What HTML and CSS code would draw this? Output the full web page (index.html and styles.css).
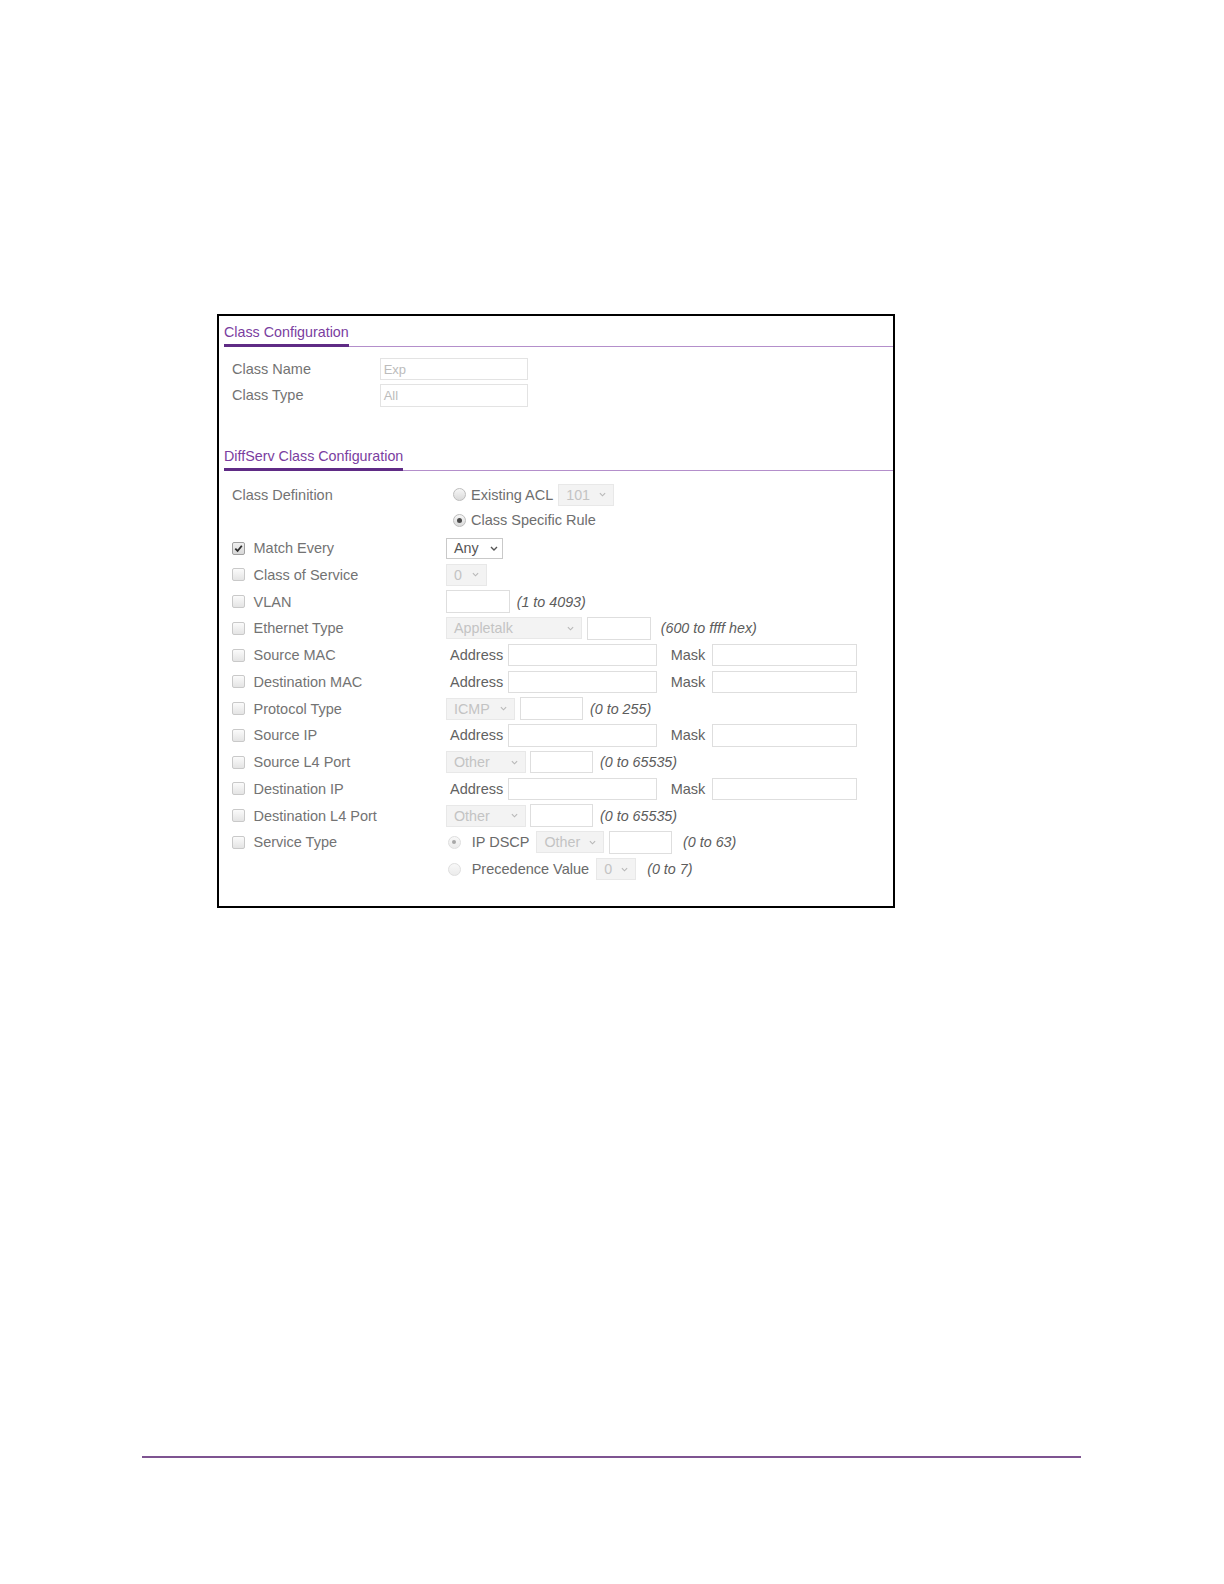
FILE: index.html
```html
<!DOCTYPE html>
<html>
<head>
<meta charset="utf-8">
<link rel="stylesheet" href="styles.css">
</head>
<body>
<div class="page">
  <div class="frame">
    <div class="sec-head"><span>Class Configuration</span></div>
    <div class="cc-rows">
      <div class="cc-row"><div class="cc-label">Class Name</div><div class="txt-dis">Exp</div></div>
      <div class="cc-row"><div class="cc-label">Class Type</div><div class="txt-dis">All</div></div>
    </div>

    <div class="sec-head sec2"><span>DiffServ Class Configuration</span></div>
    <div class="ds">
      <div class="ds-row def">
        <div class="ds-label sub">Class Definition</div>
        <div class="def-opts">
          <div class="sub ctrl"><span class="rb r-def"></span><span class="opt">Existing ACL</span><div class="sel dis w-acl"><span>101</span><svg class="chev" viewBox="0 0 8 5"><path d="M1 1 L4 4 L7 1"/></svg></div></div>
          <div class="sub ctrl"><span class="rb r-def on"></span><span class="opt">Class Specific Rule</span></div>
        </div>
      </div>

      <div class="ds-row">
        <div class="ds-label"><span class="cb on"><svg viewBox="0 0 12 12"><path d="M2.5 6.2 L5 8.7 L9.6 3"/></svg></span>Match Every</div>
        <div class="ctrl"><div class="sel en w-any"><span>Any</span><svg class="chev" viewBox="0 0 8 5"><path d="M1 1 L4 4 L7 1"/></svg></div></div>
      </div>
      <div class="ds-row">
        <div class="ds-label"><span class="cb"></span>Class of Service</div>
        <div class="ctrl"><div class="sel dis w-cos"><span>0</span><svg class="chev" viewBox="0 0 8 5"><path d="M1 1 L4 4 L7 1"/></svg></div></div>
      </div>
      <div class="ds-row">
        <div class="ds-label"><span class="cb"></span>VLAN</div>
        <div class="ctrl"><div class="inp w-sm"></div><span class="hint h-vlan">(1 to 4093)</span></div>
      </div>
      <div class="ds-row">
        <div class="ds-label"><span class="cb"></span>Ethernet Type</div>
        <div class="ctrl"><div class="sel dis w-eth"><span>Appletalk</span><svg class="chev" viewBox="0 0 8 5"><path d="M1 1 L4 4 L7 1"/></svg></div><div class="inp w-sm ml-eth"></div><span class="hint h-eth">(600 to ffff hex)</span></div>
      </div>
      <div class="ds-row">
        <div class="ds-label"><span class="cb"></span>Source MAC</div>
        <div class="ctrl"><span class="addr">Address</span><div class="inp w-addr"></div><span class="mask">Mask</span><div class="inp w-mask"></div></div>
      </div>
      <div class="ds-row">
        <div class="ds-label"><span class="cb"></span>Destination MAC</div>
        <div class="ctrl"><span class="addr">Address</span><div class="inp w-addr"></div><span class="mask">Mask</span><div class="inp w-mask"></div></div>
      </div>
      <div class="ds-row">
        <div class="ds-label"><span class="cb"></span>Protocol Type</div>
        <div class="ctrl"><div class="sel dis w-icmp"><span>ICMP</span><svg class="chev" viewBox="0 0 8 5"><path d="M1 1 L4 4 L7 1"/></svg></div><div class="inp w-sm ml-icmp"></div><span class="hint h-std">(0 to 255)</span></div>
      </div>
      <div class="ds-row">
        <div class="ds-label"><span class="cb"></span>Source IP</div>
        <div class="ctrl"><span class="addr">Address</span><div class="inp w-addr"></div><span class="mask">Mask</span><div class="inp w-mask"></div></div>
      </div>
      <div class="ds-row">
        <div class="ds-label"><span class="cb"></span>Source L4 Port</div>
        <div class="ctrl"><div class="sel dis w-other"><span>Other</span><svg class="chev" viewBox="0 0 8 5"><path d="M1 1 L4 4 L7 1"/></svg></div><div class="inp w-sm ml-other"></div><span class="hint h-std">(0 to 65535)</span></div>
      </div>
      <div class="ds-row">
        <div class="ds-label"><span class="cb"></span>Destination IP</div>
        <div class="ctrl"><span class="addr">Address</span><div class="inp w-addr"></div><span class="mask">Mask</span><div class="inp w-mask"></div></div>
      </div>
      <div class="ds-row">
        <div class="ds-label"><span class="cb"></span>Destination L4 Port</div>
        <div class="ctrl"><div class="sel dis w-other"><span>Other</span><svg class="chev" viewBox="0 0 8 5"><path d="M1 1 L4 4 L7 1"/></svg></div><div class="inp w-sm ml-other"></div><span class="hint h-std">(0 to 65535)</span></div>
      </div>
      <div class="ds-row">
        <div class="ds-label"><span class="cb"></span>Service Type</div>
        <div class="ctrl"><span class="rb r-svc on"></span><span class="opt2">IP DSCP</span><div class="sel dis w-dscp"><span>Other</span><svg class="chev" viewBox="0 0 8 5"><path d="M1 1 L4 4 L7 1"/></svg></div><div class="inp w-sm ml-icmp"></div><span class="hint h-svc">(0 to 63)</span></div>
      </div>
      <div class="ds-row">
        <div class="ds-label"></div>
        <div class="ctrl"><span class="rb r-svc"></span><span class="opt2">Precedence Value</span><div class="sel dis w-prec"><span>0</span><svg class="chev" viewBox="0 0 8 5"><path d="M1 1 L4 4 L7 1"/></svg></div><span class="hint h-svc">(0 to 7)</span></div>
      </div>
    </div>
  </div>
  <div class="rule"></div>
</div>
</body>
</html>
```

FILE: styles.css
```css
* { box-sizing: border-box; }
html, body { margin: 0; padding: 0; background: #fff; }
body { font-family: "Liberation Sans", Arial, sans-serif; color: #737373; }
.page { padding-top: 314px; height: 1584px; overflow: hidden; }
.frame { margin-left: 217px; width: 678px; height: 594px; border: 2px solid #000; }

.sec-head { display: flex; margin: 8.2px 0 0 5px; border-bottom: 1px solid #b48fcb; }
.sec-head span { font-size: 14.3px; line-height: 17px; color: #7a3da0; padding-bottom: 2.5px; border-bottom: 3px solid #5f2b85; margin-bottom: -1px; }
.sec2 { margin-top: 41.4px; }

.cc-rows { margin-top: 11.2px; padding-left: 13px; display: flex; flex-direction: column; gap: 3.8px; }
.cc-row { display: flex; align-items: center; height: 22.5px; font-size: 14.5px; }
.cc-label { width: 147.7px; }
.txt-dis { width: 148.6px; height: 22.5px; border: 1px solid #e3e3e3; font-size: 13px; color: #bcbcbc; padding-left: 3px; display: flex; align-items: center; }

.ds { margin-top: 11.5px; padding-left: 13px; font-size: 14.5px; }
.ds-row { display: flex; align-items: center; height: 26.75px; }
.ds-row.def { align-items: flex-start; height: auto; margin-bottom: 1.8px; }
.ds-label { width: 214px; flex: none; display: flex; align-items: center; color: #737373; }
.sub { height: 25.5px; display: flex; align-items: center; }
.ctrl { display: flex; align-items: center; }

.cb { width: 13px; height: 13px; border: 1px solid #c9c9c9; border-radius: 2px; background: linear-gradient(#fbfbfb, #e4e4e4); margin-right: 8.5px; flex: none; display: flex; }
.cb.on { border-color: #a0a0a0; background: linear-gradient(#f0f0f0, #d8d8d8); }
.cb svg { width: 11px; height: 11px; fill: none; stroke: #2d2d2d; stroke-width: 2; }

.rb { width: 13px; height: 13px; border-radius: 50%; border: 1px solid #bdbdbd; background: linear-gradient(#f6f6f6, #dadada); flex: none; display: flex; align-items: center; justify-content: center; }
.rb.on::after { content: ""; width: 5px; height: 5px; border-radius: 50%; background: #4a4a4a; }
.r-def { margin-left: 7.3px; }
.opt { margin-left: 4.7px; color: #6e6e6e; }
.r-svc { margin-left: 1.5px; border-color: #dedede; background: linear-gradient(#f8f8f8, #ebebeb); }
.r-svc.on::after { background: #a8a8a8; width: 4px; height: 4px; }
.opt2 { margin-left: 11.2px; color: #6a6a6a; }

.sel { height: 22px; border: 1px solid #e8e8e8; background: #f3f3f3; color: #c3c3c3; display: flex; align-items: center; justify-content: space-between; padding: 0 7px 0 7px; flex: none; font-size: 14.3px; }
.sel .chev { width: 7px; height: 5px; fill: none; stroke: #b8b8b8; stroke-width: 1.3; }
.sel.en { background: #fff; border-color: #c9c9c9; color: #555; height: 20.6px; padding: 0 4px 0 7px; }
.sel.en .chev { width: 8px; stroke: #555; stroke-width: 1.4; }
.w-acl { width: 55.7px; margin-left: 5px; height: 22.6px; }
.w-any { width: 57.3px; }
.w-cos { width: 41px; }
.w-eth { width: 136.3px; }
.w-icmp { width: 69px; }
.w-other { width: 80px; }
.w-dscp { width: 67.3px; margin-left: 7px; }
.w-prec { width: 40px; margin-left: 7px; }

.inp { height: 22.5px; border: 1px solid #dedede; background: #fff; flex: none; }
.w-sm { width: 64px; }
.ml-eth { margin-left: 4.4px; }
.ml-icmp { margin-left: 5px; width: 63.3px; }
.ml-other { margin-left: 4px; width: 63.3px; }
.w-addr { width: 148.4px; }
.w-mask { width: 145.6px; }
.addr { width: 62.3px; padding-left: 4px; color: #626262; flex: none; }
.mask { width: 55px; padding-left: 14px; color: #626262; flex: none; }

.hint { font-style: italic; font-size: 14.3px; color: #5c5c5c; }
.h-vlan { margin-left: 6.7px; }
.h-eth { margin-left: 10px; }
.h-std { margin-left: 6.7px; }
.h-svc { margin-left: 11px; }

.rule { margin: 548px 0 0 142px; width: 939px; border-top: 2px solid #7e5491; }
```
